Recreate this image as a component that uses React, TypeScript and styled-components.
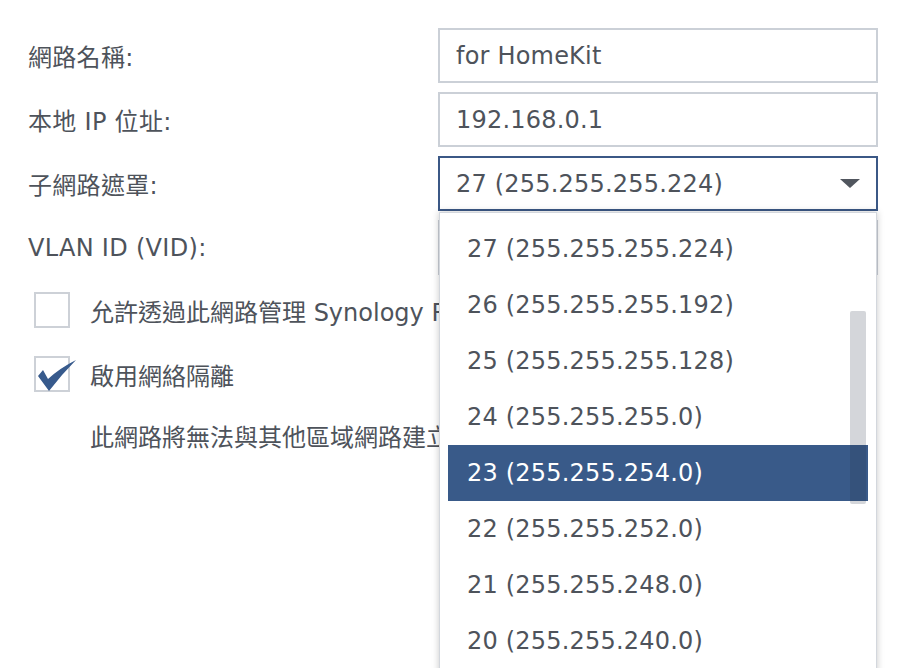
import React from "react";
import styled, { createGlobalStyle } from "styled-components";

const GlobalStyle = createGlobalStyle`
  html, body {
    margin: 0;
    padding: 0;
    background: #ffffff;
  }
  body {
    font-family: "DejaVu Sans", "Noto Sans CJK TC", sans-serif;
    color: #4e535b;
  }
`;

const Page = styled.div`
  width: 908px;
  height: 668px;
  overflow: hidden;
  box-sizing: border-box;
  padding: 28px 30px 0 28px;
  font-size: 24px;
  color: #4e535b;
`;

const Form = styled.div`
  display: flex;
  flex-direction: column;
  gap: 9px;
`;

const Row = styled.div`
  display: flex;
  align-items: center;
  height: 55px;
`;

const Label = styled.div`
  width: 410px;
  flex: none;
  white-space: nowrap;
  letter-spacing: 0.3px;
`;

const Field = styled.div`
  position: relative;
  width: 440px;
  height: 55px;
  flex: none;
`;

const TextBox = styled.div<{ $focused?: boolean }>`
  box-sizing: border-box;
  width: 100%;
  height: 100%;
  display: flex;
  align-items: center;
  padding: 0 16px;
  border: 2px solid ${(p) => (p.$focused ? "#3b5886" : "#cbd0d7")};
  background: #ffffff;
  white-space: nowrap;
  letter-spacing: 0.2px;
`;

const Arrow = styled.span`
  margin-left: auto;
  width: 0;
  height: 0;
  border-left: 10.5px solid transparent;
  border-right: 10.5px solid transparent;
  border-top: 9px solid #51565e;
`;

const Dropdown = styled.div`
  position: absolute;
  top: calc(100% + 1px);
  left: 1px;
  right: 1px;
  height: 470px;
  box-sizing: border-box;
  padding: 8px 8px 0 8px;
  background: #ffffff;
  border: 1px solid #d3d7dd;
  box-shadow: 0 0 7px rgba(0, 0, 0, 0.22);
  overflow: hidden;
  z-index: 10;
`;

const Option = styled.div<{ $selected?: boolean }>`
  height: 56px;
  display: flex;
  align-items: center;
  padding-left: 19px;
  white-space: nowrap;
  letter-spacing: 0.2px;
  background: ${(p) => (p.$selected ? "#395a89" : "transparent")};
  color: ${(p) => (p.$selected ? "#ffffff" : "#4e535b")};
`;

const ScrollThumb = styled.div`
  position: absolute;
  top: 98px;
  right: 10px;
  width: 16px;
  height: 193px;
  border-radius: 2px;
  background: rgba(40, 50, 70, 0.2);
`;

const CheckRow = styled.div<{ $top: number }>`
  display: flex;
  align-items: center;
  gap: 20px;
  height: 36px;
  padding-left: 6px;
  margin-top: ${(p) => p.$top}px;
  white-space: nowrap;
`;

const Box = styled.span`
  position: relative;
  box-sizing: border-box;
  width: 36px;
  height: 36px;
  flex: none;
  border: 2px solid #cdd1d7;
  background: #ffffff;
`;

const CheckMark = styled.svg`
  position: absolute;
  left: -2px;
  top: -2px;
  overflow: visible;
`;

const Description = styled.div`
  margin-top: 29px;
  padding-left: 62px;
  line-height: 34px;
  white-space: nowrap;
`;

const options = [
  "27 (255.255.255.224)",
  "26 (255.255.255.192)",
  "25 (255.255.255.128)",
  "24 (255.255.255.0)",
  "23 (255.255.254.0)",
  "22 (255.255.252.0)",
  "21 (255.255.248.0)",
  "20 (255.255.240.0)",
  "19 (255.255.224.0)",
];

export default function App() {
  return (
    <>
      <GlobalStyle />
      <Page>
        <Form>
          <Row>
            <Label>網路名稱:</Label>
            <Field>
              <TextBox>for HomeKit</TextBox>
            </Field>
          </Row>
          <Row>
            <Label>本地 IP 位址:</Label>
            <Field>
              <TextBox>192.168.0.1</TextBox>
            </Field>
          </Row>
          <Row>
            <Label>子網路遮罩:</Label>
            <Field>
              <TextBox $focused>
                27 (255.255.255.224)
                <Arrow />
              </TextBox>
              <Dropdown>
                {options.map((o) => (
                  <Option key={o} $selected={o.startsWith("23")}>
                    {o}
                  </Option>
                ))}
                <ScrollThumb />
              </Dropdown>
            </Field>
          </Row>
          <Row>
            <Label>VLAN ID (VID):</Label>
            <Field>
              <TextBox />
            </Field>
          </Row>
        </Form>
        <CheckRow $top={17}>
          <Box />
          允許透過此網路管理 Synology Router
        </CheckRow>
        <CheckRow $top={28}>
          <Box>
            <CheckMark width="44" height="36" viewBox="0 0 44 36">
              <path
                d="M4 20 L9 14 L14 23 Q26 12 42 4 Q28 18 15 35 Z"
                fill="#375a8c"
              />
            </CheckMark>
          </Box>
          啟用網絡隔離
        </CheckRow>
        <Description>此網路將無法與其他區域網路建立連線。</Description>
      </Page>
    </>
  );
}
